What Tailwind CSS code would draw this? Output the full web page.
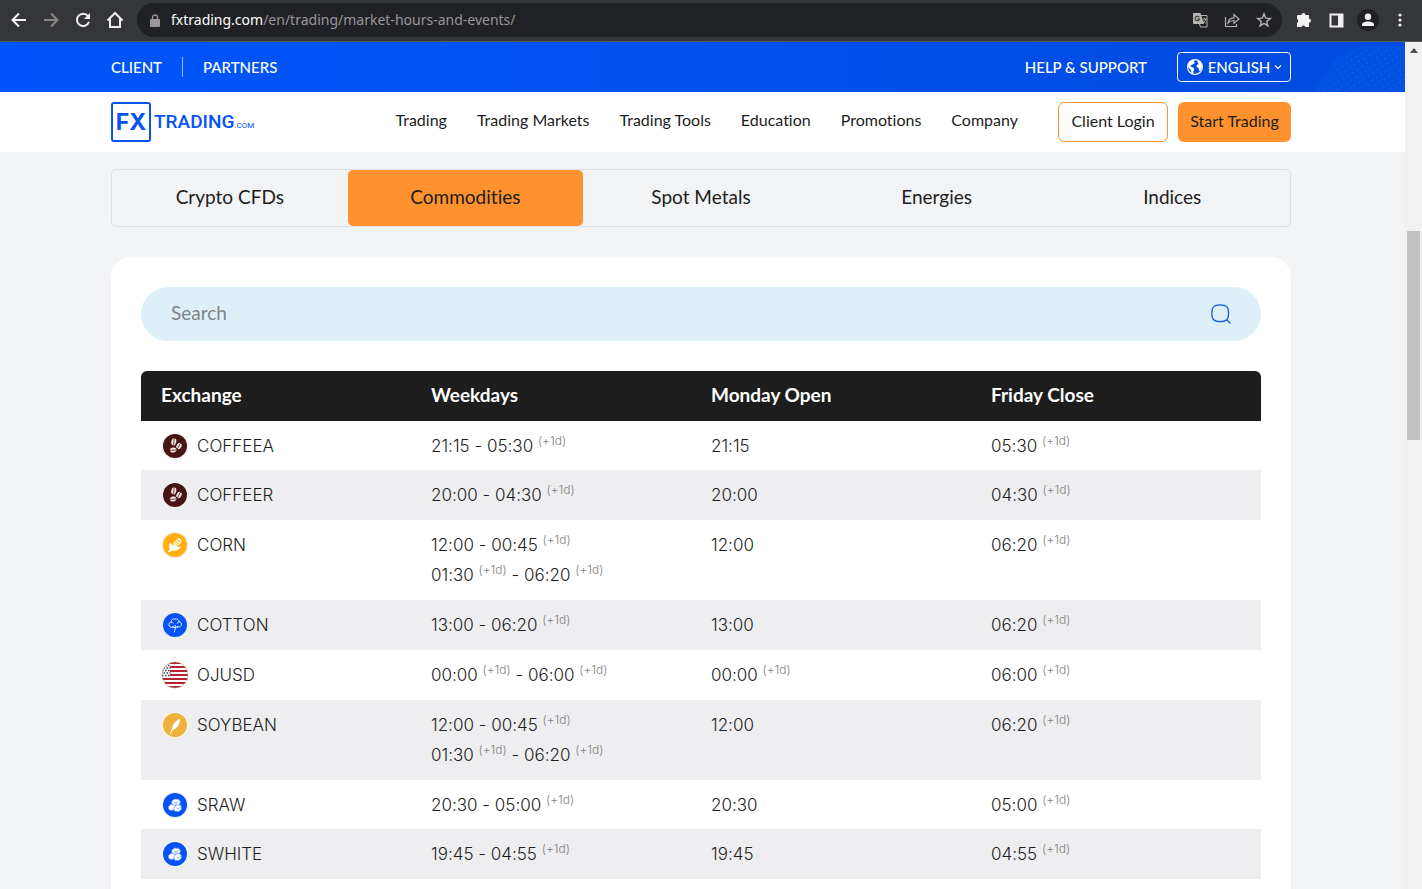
<!DOCTYPE html>
<html lang="en">
<head>
<meta charset="utf-8">
<title>Market Hours and Events</title>
<script src="https://cdn.jsdelivr.net/npm/@tailwindcss/browser@4"></script>
</head>
<body class="flex h-screen flex-col overflow-hidden bg-[#f2f3f5] font-['Lato',sans-serif] text-[#1d1d1d] [font-variant-ligatures:none]">

<svg class="absolute size-0" aria-hidden="true">
  <symbol id="coffee" viewBox="0 0 28 28">
    <circle cx="14" cy="14" r="13.500" fill="#f3f3f5"/><circle cx="14" cy="14" r="12" fill="#471512"/>
    <g fill="#efe6da"><ellipse cx="12.800" cy="9.800" rx="2.500" ry="3.600" transform="rotate(12 12.800 9.800)"/><ellipse cx="18" cy="14" rx="2.400" ry="3.300" transform="rotate(30 18 14)"/><ellipse cx="12.200" cy="18" rx="3.300" ry="2.500" transform="rotate(-12 12.200 18)"/></g>
    <g fill="none" stroke="#471512" stroke-width=".8"><path d="M13.700 6c-1.800 2.500.3 4-1.700 7.500M20 11c-2.500 1-1 3.500-4 6.200M9 19c2-2 4.300.6 6.500-1.700"/></g>
  </symbol>
  <symbol id="corn" viewBox="0 0 28 28">
    <circle cx="14" cy="14" r="13.500" fill="#f3f3f5"/><circle cx="14" cy="14" r="12" fill="#ffae0b"/>
    <path d="M9 11.500c1.500 1 2 2 2.500 3.500 1-2.500 2.500-5.500 5-7.500 2-.8 4 .8 4 2.500-.8 3-3 4.500-5 6 1.500 0 3-.5 5-.2-2 1.500-3.500 3.700-6.500 4-2 .2-3-.4-4 0L8 21.500 7 20.500l1.800-2c-.8-2-.6-4.500.2-7z" fill="#fff"/>
    <path d="M14.500 10.500l4 3M16 8.500l4 3M17 8l-4 6M19.500 9l-4.500 6" stroke="#ffae0b" stroke-width=".7"/>
  </symbol>
  <symbol id="cotton" viewBox="0 0 28 28">
    <circle cx="14" cy="14" r="13" fill="#e9f0f6"/><circle cx="14" cy="14" r="12" fill="#0553f5"/>
    <path d="M12.500 16c-2 1-5 0-4.500-2.500C8 12 9 11.300 10 11.300 10 9 12 7.500 14 8c2-.5 4 .8 4.200 3 2 .2 2.800 2 2 3.500-.8 1.500-3 2-4.400 1.300M10 11.300c1 0 1.800.5 2.200 1.200M18.200 11c-1 0-1.800.6-2 1.500M11 15.500l3.200 1.300 3-1.300M14.200 14v3.500c0 1.500-.7 2.700-1 3.800" fill="none" stroke="#fff" stroke-width=".9"/>
  </symbol>
  <symbol id="usa" viewBox="0 0 28 28">
    <clipPath id="disc"><circle cx="14" cy="14" r="13"/></clipPath>
    <g clip-path="url(#disc)"><path fill="#fff" d="M0 0h28v28H0z"/>
    <path stroke="#b3282d" stroke-width="2" d="M0 2h28M0 6h28M0 10h28M0 14h28M0 18h28M0 22h28M0 26h28"/>
    <path fill="#fff" d="M0 0h9v15H0z"/><path stroke="#31405f" stroke-width="1.500" stroke-dasharray="1.500 1.500" d="M1 4.500h8M2.500 7h7M1 9.500h8M2.500 12h7M1 14.500h8"/></g>
    <circle cx="14" cy="14" r="13" fill="none" stroke="#a99a96" stroke-width=".6"/>
  </symbol>
  <symbol id="soy" viewBox="0 0 28 28">
    <circle cx="14" cy="14" r="13.500" fill="#f5f3f0"/><circle cx="14" cy="14" r="12" fill="#efb03c"/>
    <path d="M18.700 7.500c.8 2.500 0 4.500-1.400 6.700l-.2 1.400-1.200.5c-1 1.600-2.500 2.300-4 2.800-.9 1-1.500 2.500-2 4.500l-.8-.3c.4-2 1-3.700 2-5-.2-2 .6-4 1.900-5.300l.3-1.400 1.300-.4c1-1.600 2.500-2.700 4.100-3.500z" fill="#fff"/>
  </symbol>
  <symbol id="sugar" viewBox="0 0 28 28">
    <circle cx="14" cy="14" r="13.500" fill="#f1f5f8"/><circle cx="14" cy="14" r="12" fill="#0553f5"/>
    <g fill="#fff" stroke="#5e92f8" stroke-width=".7"><path d="M10.500 10.500l3-2.500 4 .2 2 2.300-1 3.500-3.500 1-3.800-1z"/><path d="M7.500 15.500l2.500-2.300 3.200.5 1.300 2.600-1.500 2.700-3.500.5-2-1.500z"/><path d="M13.500 15.500l3-2 3.500 1 .5 3.500-2.500 2.500-4-.2-1.500-2.300z"/><path fill="none" d="M13 11l2 1 2.500-1.500M15 12v2M15.500 17l2 .8 2-1.500"/></g>
  </symbol>
</svg>

<!-- Browser toolbar -->
<header class="flex h-[42px] shrink-0 items-center border-b border-[#58595c] bg-[#35363a] pr-[6px] pb-[1px] pl-[10px] font-['Noto_Sans',sans-serif] text-[#f1f1f1]">
  <div class="flex w-[127px] gap-[14px]">
    <button aria-label="Back"><svg class="size-[18px]" viewBox="0 0 18 18" fill="none" stroke="currentColor" stroke-width="2"><path d="M16 9H3M9 2.500L2.500 9 9 15.500"/></svg></button>
    <button aria-label="Forward" class="text-[#8a8684]"><svg class="size-[18px]" viewBox="0 0 18 18" fill="none" stroke="currentColor" stroke-width="2"><path d="M2 9h13M9 2.500L15.500 9 9 15.500"/></svg></button>
    <button aria-label="Reload"><svg class="size-[18px]" viewBox="0 0 18 18" fill="none" stroke="currentColor" stroke-width="2"><path d="M14 5A6.200 6.200 0 1 0 15 10.800"/><path d="M16 2v6h-6z" fill="currentColor" stroke="none"/></svg></button>
    <button aria-label="Home"><svg class="size-[18px]" viewBox="0 0 18 18" fill="none" stroke="currentColor" stroke-width="2"><path d="M1.500 9.500L9 2l7.500 7.500M4 8v8h10V8"/></svg></button>
  </div>
  <div class="flex h-[34px] flex-1 items-center rounded-full bg-[#202124] pr-[10px] pl-[13px] text-[#9a969b]">
    <svg class="mr-[11px] h-[13px] w-[10px]" viewBox="0 0 10 13" fill="currentColor"><path d="M1 5h8a1 1 0 0 1 1 1v6a1 1 0 0 1-1 1H1a1 1 0 0 1-1-1V6a1 1 0 0 1 1-1z"/><path d="M2.500 6V3.500a2.500 2.500 0 0 1 5 0V6" fill="none" stroke="currentColor" stroke-width="1.400"/></svg>
    <p class="flex-1 text-[14px] leading-[20px]"><span class="text-white">fxtrading.com</span>/en/trading/market-hours-and-events/</p>
    <div class="flex gap-[16px] text-[#b5b2b0]">
      <button aria-label="Translate"><svg class="size-[16px]" viewBox="0 0 16 16"><path d="M1 1h7.500l3.500 11H2a1 1 0 0 1-1-1z" fill="currentColor"/><path d="M9 3.500h6v11.500H8.500l-1-3" fill="none" stroke="currentColor"/><path d="M7.200 5.200A2.200 2.200 0 1 0 7.500 7H5.500" fill="none" stroke="#35363a" stroke-width="1.100"/><path d="M10.500 7h4M12.500 6v1M13.700 7c-.5 2-1.500 3-2.500 4M11.700 8.500c.5 1.500 1.200 2 2.200 3" fill="none" stroke="currentColor" stroke-width=".9"/></svg></button>
      <button aria-label="Share"><svg class="size-[16px]" viewBox="0 0 16 16" fill="none" stroke="currentColor" stroke-width="1.200"><path d="M1.500 5v9.500h11V12"/><path d="M4 11c.5-3.500 3-5.200 6-5.200V2.500L15 7l-5 4.200V8.500C7.500 8.500 5.500 9.200 4 11z"/></svg></button>
      <button aria-label="Bookmark"><svg class="size-[16px]" viewBox="0 0 16 16" fill="none" stroke="currentColor" stroke-width="1.400"><path d="M8 1.800l1.700 4.300 4.600.3-3.600 3 1.200 4.500L8 11.400l-3.900 2.500 1.200-4.500-3.600-3 4.600-.3z"/></svg></button>
    </div>
  </div>
  <div class="flex items-center pl-[6px] [&_button]:flex [&_button]:w-[32px] [&_button]:justify-center">
    <button aria-label="Extensions"><svg class="size-[16px]" viewBox="0 0 16 16" fill="currentColor"><path d="M2 3h3.500a2 2 0 1 1 4 0H13v3.700a2 2 0 1 1 0 4V15H9.300a1.900 1.900 0 0 0-3.700 0H1v-4.200a2 2 0 0 0 0-3.700V4a1 1 0 0 1 1-1z"/></svg></button>
    <button aria-label="Side panel"><svg class="size-[15px]" viewBox="0 0 15 15"><path fill="currentColor" fill-rule="evenodd" d="M.5.500h14v14H.5zM2.500 2.500v10H9v-10z"/></svg></button>
    <button aria-label="Profile"><svg class="size-[22px]" viewBox="0 0 22 22" fill="currentColor"><circle cx="11" cy="11" r="11" fill="#202124"/><circle cx="11" cy="7.800" r="3.200"/><path d="M5 17v-1.500c0-2 3-3 6-3s6 1 6 3V17z"/></svg></button>
    <button aria-label="Menu"><svg class="h-[16px] w-[10px]" viewBox="0 0 10 16" fill="currentColor"><circle cx="5" cy="3" r="1.600"/><circle cx="5" cy="8" r="1.600"/><circle cx="5" cy="13" r="1.600"/></svg></button>
  </div>
</header>

<div class="flex min-h-0 flex-1">
  <div class="min-w-0 flex-1 overflow-hidden">

    <!-- Utility bar -->
    <div class="relative h-[50px] bg-linear-to-r from-[#0055fa] to-[#004be0] pr-[3px] text-white">
      <svg class="absolute top-0 right-0 h-[50px] w-[92px]" viewBox="0 0 92 50"><defs><pattern id="dots" width="8" height="8" patternUnits="userSpaceOnUse" patternTransform="rotate(12)"><path fill="#2a78b0" d="M1 1h1v1H1zM5 5h1v1H5z"/></pattern></defs><path fill="#0450e4" d="M0 50C16 22 28 6 52 4h40v46z"/><path fill="url(#dots)" d="M8 50C24 24 34 8 52 6h40v44z"/></svg>
      <div class="mx-auto flex h-full max-w-[1180px] items-center text-[15px] leading-[20px] font-medium">
        <a href="#" class="border-r border-white/60 pr-[20px]">CLIENT</a>
        <a href="#" class="flex-1 pl-[20px]">PARTNERS</a>
        <a href="#" class="mr-[30px]">HELP &amp; SUPPORT</a>
        <button class="relative flex h-[30px] w-[114px] items-center justify-between rounded-[4px] border border-white px-[8px]">
          <svg class="size-[18px]" viewBox="0 0 18 18"><circle cx="9" cy="9" r="7.400" fill="none" stroke="#fff" stroke-width="1.200"/><path fill="#fff" d="M2 6.500C3.500 3 6 1.500 9 1.700l-1 2 1 1.300-2.500 1.500-2 1 .5 1.300 2.500 1 1 1.700-1 1.500-.5 3-1.500-1-.5-3-2.500-2.500zM11.500 2.500c2.500.8 4.500 3 4.800 6l-1.500 4-1.800.5-.5-3-2-1.200.5-2 2-.8-1.500-1.500z"/></svg>
          <span>ENGLISH</span>
          <svg class="size-[8px]" viewBox="0 0 8 8" fill="none" stroke="#fff" stroke-width="1.100"><path d="M1 2.500l3 3 3-3"/></svg>
        </button>
      </div>
    </div>

    <!-- Main navigation -->
    <div class="h-[60px] bg-white pr-[3px]">
      <div class="mx-auto flex h-full max-w-[1180px] items-center text-[16px] leading-[20px]">
        <a href="#" class="flex items-center gap-[3px] text-[#0553f5]" aria-label="FX Trading home">
          <span class="flex size-[40px] items-center justify-center rounded-[3px] border-2 border-[#0553f5] font-['Inter',sans-serif] text-[23px] font-bold">FX</span>
          <span class="flex items-baseline pt-[4px] font-['Roboto',sans-serif] text-[19px] font-medium">TRADING<span class="text-[8px] font-normal">.COM</span></span>
        </a>
        <nav class="ml-auto flex gap-[30px] pb-[4px]">
          <a href="#">Trading</a><a href="#">Trading Markets</a><a href="#">Trading Tools</a><a href="#">Education</a><a href="#">Promotions</a><a href="#">Company</a>
        </nav>
        <button class="ml-[40px] h-[40px] w-[110px] rounded-[6px] border border-[#ff922e] pb-[2px]">Client Login</button>
        <button class="ml-[10px] h-[40px] w-[113px] rounded-[6px] bg-[#ff922e] pb-[2px]">Start Trading</button>
      </div>
    </div>

    <main class="pt-[17px] pr-[3px]">
      <div class="mx-auto max-w-[1180px]">
        <div class="grid h-[58px] grid-cols-5 rounded-[5px] border border-[#dfe0e3] text-[19px] [&_button]:pb-[2px]">
          <button>Crypto CFDs</button>
          <button class="rounded-[5px] bg-[#ff922e]">Commodities</button>
          <button>Spot Metals</button>
          <button>Energies</button>
          <button>Indices</button>
        </div>

        <section class="mt-[30px] rounded-[20px] bg-white p-[30px]">
          <form class="flex h-[54px] items-center rounded-full bg-[#ddf0f8] px-[30px]">
            <input type="search" aria-label="Search" placeholder="Search" class="flex-1 bg-transparent pb-[2px] text-[19px] outline-none placeholder:text-[#7d8386]">
            <button aria-label="Submit search"><svg class="size-[20px]" viewBox="0 0 20 20" fill="none" stroke="#0a5cf0" stroke-width="1.200"><path d="M9.200.8c6.200 0 8.400 2.200 8.400 8.400s-2.200 8.400-8.400 8.400S.8 15.400.8 9.200 3 .8 9.200.800zM15.500 15.500l4 4"/></svg></button>
          </form>

          <table class="mt-[30px] w-full table-fixed text-left font-['Inter',sans-serif] text-[17px] leading-[30px] font-light [&_sup]:top-[-7px] [&_sup]:text-[12px] [&_sup]:text-[#808080] [&_td]:px-[10px] [&_td]:pt-[10px] [&_td]:pb-[10px] [&_td]:align-top [&_td:first-child]:pl-[20px] [&_th]:px-[10px] [&_tbody_tr:nth-child(even)]:bg-[#eeeef0] [&_tbody_tr:nth-child(6n+1)_td]:pb-[9px]">
            <thead>
              <tr class="h-[50px] font-['Lato',sans-serif] text-[19px] text-white [&_th]:bg-[#1d1d1d] [&_th]:pb-[2px] [&_th]:font-bold">
                <th class="rounded-tl-[6px] pl-[20px]!">Exchange</th><th>Weekdays</th><th>Monday Open</th><th class="rounded-tr-[6px]">Friday Close</th>
              </tr>
            </thead>
            <tbody>
              <tr><td><div class="flex items-center gap-[8px]"><svg class="size-[28px]"><use href="#coffee"/></svg>COFFEEA</div></td><td>21:15 - 05:30 <sup>(+1d)</sup></td><td>21:15</td><td>05:30 <sup>(+1d)</sup></td></tr>
              <tr><td><div class="flex items-center gap-[8px]"><svg class="size-[28px]"><use href="#coffee"/></svg>COFFEER</div></td><td>20:00 - 04:30 <sup>(+1d)</sup></td><td>20:00</td><td>04:30 <sup>(+1d)</sup></td></tr>
              <tr><td><div class="flex items-center gap-[8px]"><svg class="size-[28px]"><use href="#corn"/></svg>CORN</div></td><td>12:00 - 00:45 <sup>(+1d)</sup><br>01:30 <sup>(+1d)</sup> - 06:20 <sup>(+1d)</sup></td><td>12:00</td><td>06:20 <sup>(+1d)</sup></td></tr>
              <tr><td><div class="flex items-center gap-[8px]"><svg class="size-[28px]"><use href="#cotton"/></svg>COTTON</div></td><td>13:00 - 06:20 <sup>(+1d)</sup></td><td>13:00</td><td>06:20 <sup>(+1d)</sup></td></tr>
              <tr><td><div class="flex items-center gap-[8px]"><svg class="size-[28px]"><use href="#usa"/></svg>OJUSD</div></td><td>00:00 <sup>(+1d)</sup> - 06:00 <sup>(+1d)</sup></td><td>00:00 <sup>(+1d)</sup></td><td>06:00 <sup>(+1d)</sup></td></tr>
              <tr><td><div class="flex items-center gap-[8px]"><svg class="size-[28px]"><use href="#soy"/></svg>SOYBEAN</div></td><td>12:00 - 00:45 <sup>(+1d)</sup><br>01:30 <sup>(+1d)</sup> - 06:20 <sup>(+1d)</sup></td><td>12:00</td><td>06:20 <sup>(+1d)</sup></td></tr>
              <tr><td><div class="flex items-center gap-[8px]"><svg class="size-[28px]"><use href="#sugar"/></svg>SRAW</div></td><td>20:30 - 05:00 <sup>(+1d)</sup></td><td>20:30</td><td>05:00 <sup>(+1d)</sup></td></tr>
              <tr><td><div class="flex items-center gap-[8px]"><svg class="size-[28px]"><use href="#sugar"/></svg>SWHITE</div></td><td>19:45 - 04:55 <sup>(+1d)</sup></td><td>19:45</td><td>04:55 <sup>(+1d)</sup></td></tr>
            </tbody>
          </table>
        </section>
      </div>
    </main>
  </div>

  <!-- Scrollbar -->
  <div class="flex w-[17px] shrink-0 flex-col items-center bg-[#f1f1f1]">
    <svg class="mt-[6px] h-[5px] w-[8px]" viewBox="0 0 8 5"><path fill="#505050" d="M4 0l4 5H0z"/></svg>
    <div class="mt-[178px] h-[209px] w-[13px] bg-[#c1c1c1]"></div>
  </div>
</div>
</body>
</html>
